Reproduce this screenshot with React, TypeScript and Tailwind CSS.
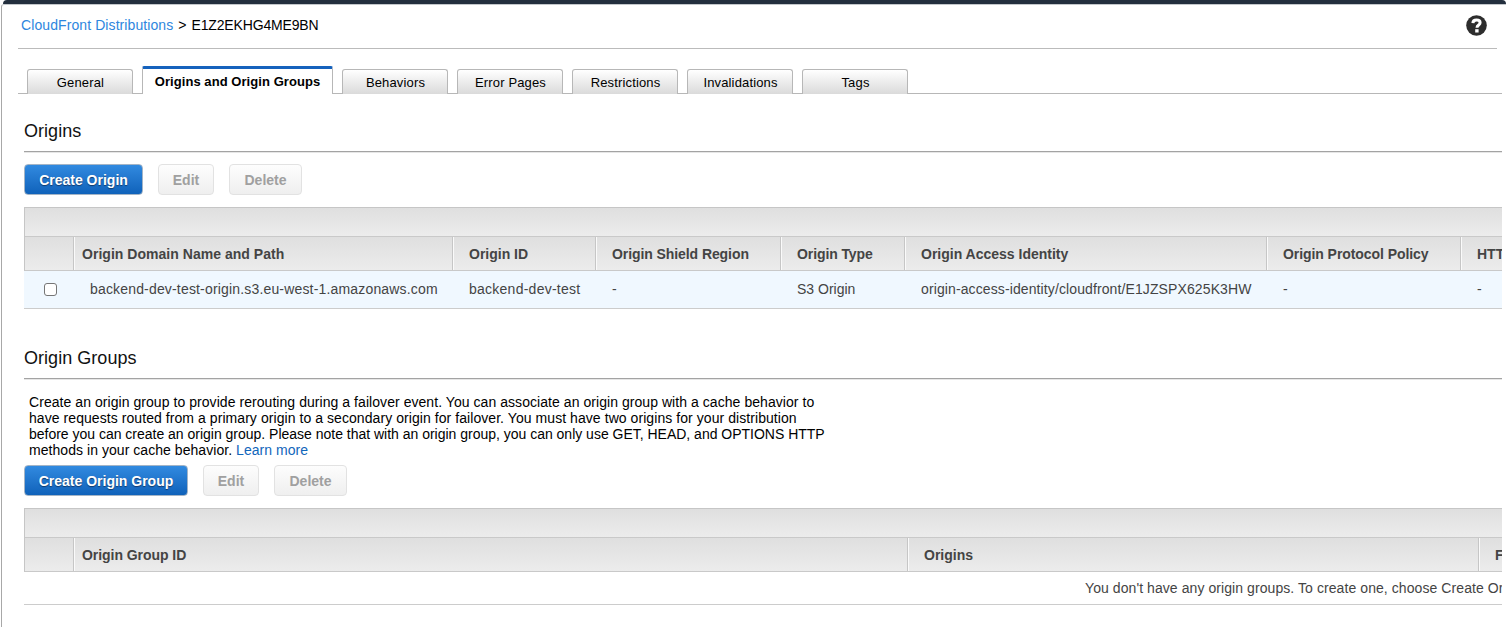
import React from "react";

const TABS = ["General", "Origins and Origin Groups", "Behaviors", "Error Pages", "Restrictions", "Invalidations", "Tags"];
const ACTIVE_TAB = "Origins and Origin Groups";

interface Column {
  title: string;
  value?: string;
  width: string;
  titleTracking?: string;
  valueTracking?: string;
}

const ORIGIN_COLUMNS: Column[] = [
  { title: "Origin ID", value: "backend-dev-test", width: "w-[143px]", valueTracking: "tracking-[0.25px]" },
  { title: "Origin Shield Region", value: "-", width: "w-[185px]", titleTracking: "tracking-[-0.08px]" },
  { title: "Origin Type", value: "S3 Origin", width: "w-[124px]", titleTracking: "tracking-[-0.1px]" },
  {
    title: "Origin Access Identity",
    value: "origin-access-identity/cloudfront/E1JZSPX625K3HW",
    width: "w-[362px]",
    valueTracking: "tracking-[0.11px]",
  },
  { title: "Origin Protocol Policy", value: "-", width: "w-[194px]", titleTracking: "tracking-[-0.07px]" },
  { title: "HTTPS Port", value: "-", width: "w-[140px]" },
];

function Tab({ label }: { label: string }) {
  if (label === ACTIVE_TAB) {
    return (
      <button className="h-7 w-[191px] shrink-0 rounded-t-[2px] border-x border-t-[3px] border-x-[#b7b7b7] border-t-[#1562bd] bg-white pb-px text-[13px] leading-[25px] font-bold tracking-[0.06px] whitespace-nowrap text-black">
        {label}
      </button>
    );
  }
  return (
    <button className="h-[25px] w-[106px] shrink-0 rounded-t-[3px] border border-b-0 border-[#b7b7b7] bg-linear-to-b from-white to-[#dadada] pt-px pl-px text-[13px] leading-6 tracking-[0.15px] whitespace-nowrap text-black">
      {label}
    </button>
  );
}

function Toolbar({ primary, width }: { primary: string; width: string }) {
  const disabled =
    "h-[31px] rounded-[4px] border border-[#e2e2e2] bg-linear-to-b from-[#fdfdfd] to-[#efefef] pt-0.5 text-[14px] font-bold text-[#a0a0a0]";
  return (
    <div className="flex gap-[15px]">
      <button
        className={`${width} h-[31px] rounded-[4px] border border-[#a3b4c6] bg-linear-to-b from-[#318ae0] to-[#0f62ba] pt-0.5 text-[14px] font-bold whitespace-nowrap text-white [text-shadow:0_1px_1px_#123a6b]`}
      >
        {primary}
      </button>
      <button className={`w-14 ${disabled}`}>Edit</button>
      <button className={`w-[73px] ${disabled}`}>Delete</button>
    </div>
  );
}

function SectionTitle({ children }: { children: string }) {
  return (
    <h2 className="h-[31px] border-b border-[#a3a3a3] text-[18px] leading-5 tracking-[0.04px] text-[#111] shadow-[0_1px_0_#e6e6e6]">
      {children}
    </h2>
  );
}

function HeaderCell({
  title,
  width,
  pad = "pl-4",
  tracking = "tracking-normal",
}: {
  title: string;
  width: string;
  pad?: string;
  tracking?: string;
}) {
  return (
    <div
      className={`${width} ${pad} ${tracking} h-full shrink-0 border-r border-[#c6c6c6] text-[14px] leading-[34px] font-bold whitespace-nowrap text-[#444] shadow-[inset_1px_0_0_#fafafa]`}
    >
      {title}
    </div>
  );
}

function TableHead({ children }: { children: React.ReactNode }) {
  return (
    <div className="border-t border-l border-[#c6c6c6]">
      <div className="h-7 bg-linear-to-b from-[#dfdfdf] to-[#ececec]" />
      <div className="flex h-[35px] border-y border-[#c9c9c9] bg-linear-to-b from-[#dfdfdf] to-[#ececec]">
        <div className="w-[49px] shrink-0 border-r border-[#c6c6c6]" />
        {children}
      </div>
    </div>
  );
}

export default function App() {
  return (
    <div className="h-[633px] w-[1509px] overflow-hidden bg-white font-['Liberation_Sans',Arial,sans-serif] text-[14px] text-black">
      <div className="ml-[3px] h-1 w-[1503px] rounded-t-[4px] bg-[#232f3e]" />
      <div className="ml-px h-[623px] w-[1505px] rounded-tl-[3px] border-t border-l border-t-[#c3c7cb] border-l-[#a8a8a8]">
        <header className="ml-4 flex h-11 w-[1479px] items-center justify-between border-b border-[#bbb] pb-[2px] pl-[3px]">
          <div className="pb-0.5 text-[14px] leading-5 whitespace-nowrap">
            <a className="tracking-[0.09px] text-[#2e86de]">CloudFront Distributions</a>
            <span className="mx-[5px] tracking-normal">&gt;</span>
            <span className="tracking-[-0.16px]">E1Z2EKHG4ME9BN</span>
          </div>
          <svg className="mr-[10px] size-[21px]" viewBox="0 0 21 21" fill="none">
            <circle cx="10.5" cy="10.5" r="10.3" fill="#2d2d2d" />
            <path d="M6.9 8.1C7 6 8.4 5.1 10.5 5.1s3.6 1 3.6 2.7c0 2.2-3.1 2.2-3.1 4.9" stroke="#fff" strokeWidth="3" />
            <path d="M9.2 14.2h3.4v3.3H9.2z" fill="#fff" />
          </svg>
        </header>

        <nav className="mt-[17px] ml-4 h-7 w-[1484px] bg-[linear-gradient(#b7b7b7,#b7b7b7)] bg-[length:100%_1px] bg-bottom bg-no-repeat pl-[9px]">
          <div className="flex items-end gap-[9px]">
            {TABS.map((tab) => (
              <Tab key={tab} label={tab} />
            ))}
          </div>
        </nav>

        <main className="ml-[22px] w-[1478px] overflow-hidden">
          <section className="pt-[27px]">
            <SectionTitle>Origins</SectionTitle>
            <div className="pt-3 pb-3">
              <Toolbar primary="Create Origin" width="w-[119px]" />
            </div>
            <TableHead>
              <HeaderCell title="Origin Domain Name and Path" width="w-[379px]" pad="pl-2" tracking="tracking-[0.03px]" />
              {ORIGIN_COLUMNS.map((c) => (
                <HeaderCell key={c.title} title={c.title} width={c.width} tracking={c.titleTracking} />
              ))}
            </TableHead>
            <div className="flex h-[38px] w-[1700px] border-b border-[#ccc] bg-[#f0f8ff] leading-9 whitespace-nowrap text-[#444]">
              <div className="flex w-[50px] shrink-0 items-center pl-5">
                <span className="size-[13px] rounded-[3px] border border-[#767676] bg-white" />
              </div>
              <div className="w-[379px] shrink-0 pl-4 tracking-[0.17px]">backend-dev-test-origin.s3.eu-west-1.amazonaws.com</div>
              {ORIGIN_COLUMNS.map((c) => (
                <div key={c.title} className={`${c.width} ${c.valueTracking ?? "tracking-normal"} shrink-0 pl-4`}>
                  {c.value}
                </div>
              ))}
            </div>
          </section>

          <section className="pt-[39px]">
            <SectionTitle>Origin Groups</SectionTitle>
            <p className="pt-[15px] pb-[7px] pl-[5px] leading-4 whitespace-nowrap">
              <span className="tracking-[0.055px]">
                Create an origin group to provide rerouting during a failover event. You can associate an origin group with a cache behavior to
              </span>
              <br />
              <span className="tracking-[0.065px]">
                have requests routed from a primary origin to a secondary origin for failover. You must have two origins for your distribution
              </span>
              <br />
              <span className="tracking-[-0.01px]">
                before you can create an origin group. Please note that with an origin group, you can only use GET, HEAD, and OPTIONS HTTP
              </span>
              <br />
              <span className="tracking-[0.05px]">
                methods in your cache behavior. <a className="text-[#1166bb]">Learn more</a>
              </span>
            </p>
            <div className="pb-3">
              <Toolbar primary="Create Origin Group" width="w-[164px]" />
            </div>
            <TableHead>
              <HeaderCell title="Origin Group ID" width="w-[834px]" pad="pl-2" tracking="tracking-[-0.05px]" />
              <HeaderCell title="Origins" width="w-[571px]" />
              <HeaderCell title="Failover criteria" width="w-[300px]" />
            </TableHead>
            <div className="h-[33px] w-[1700px] border-b border-[#ccc] pl-[1061px] leading-8 tracking-[0.075px] whitespace-nowrap text-[#444]">
              You don't have any origin groups. To create one, choose Create Origin Group.
            </div>
          </section>
        </main>
      </div>
    </div>
  );
}
